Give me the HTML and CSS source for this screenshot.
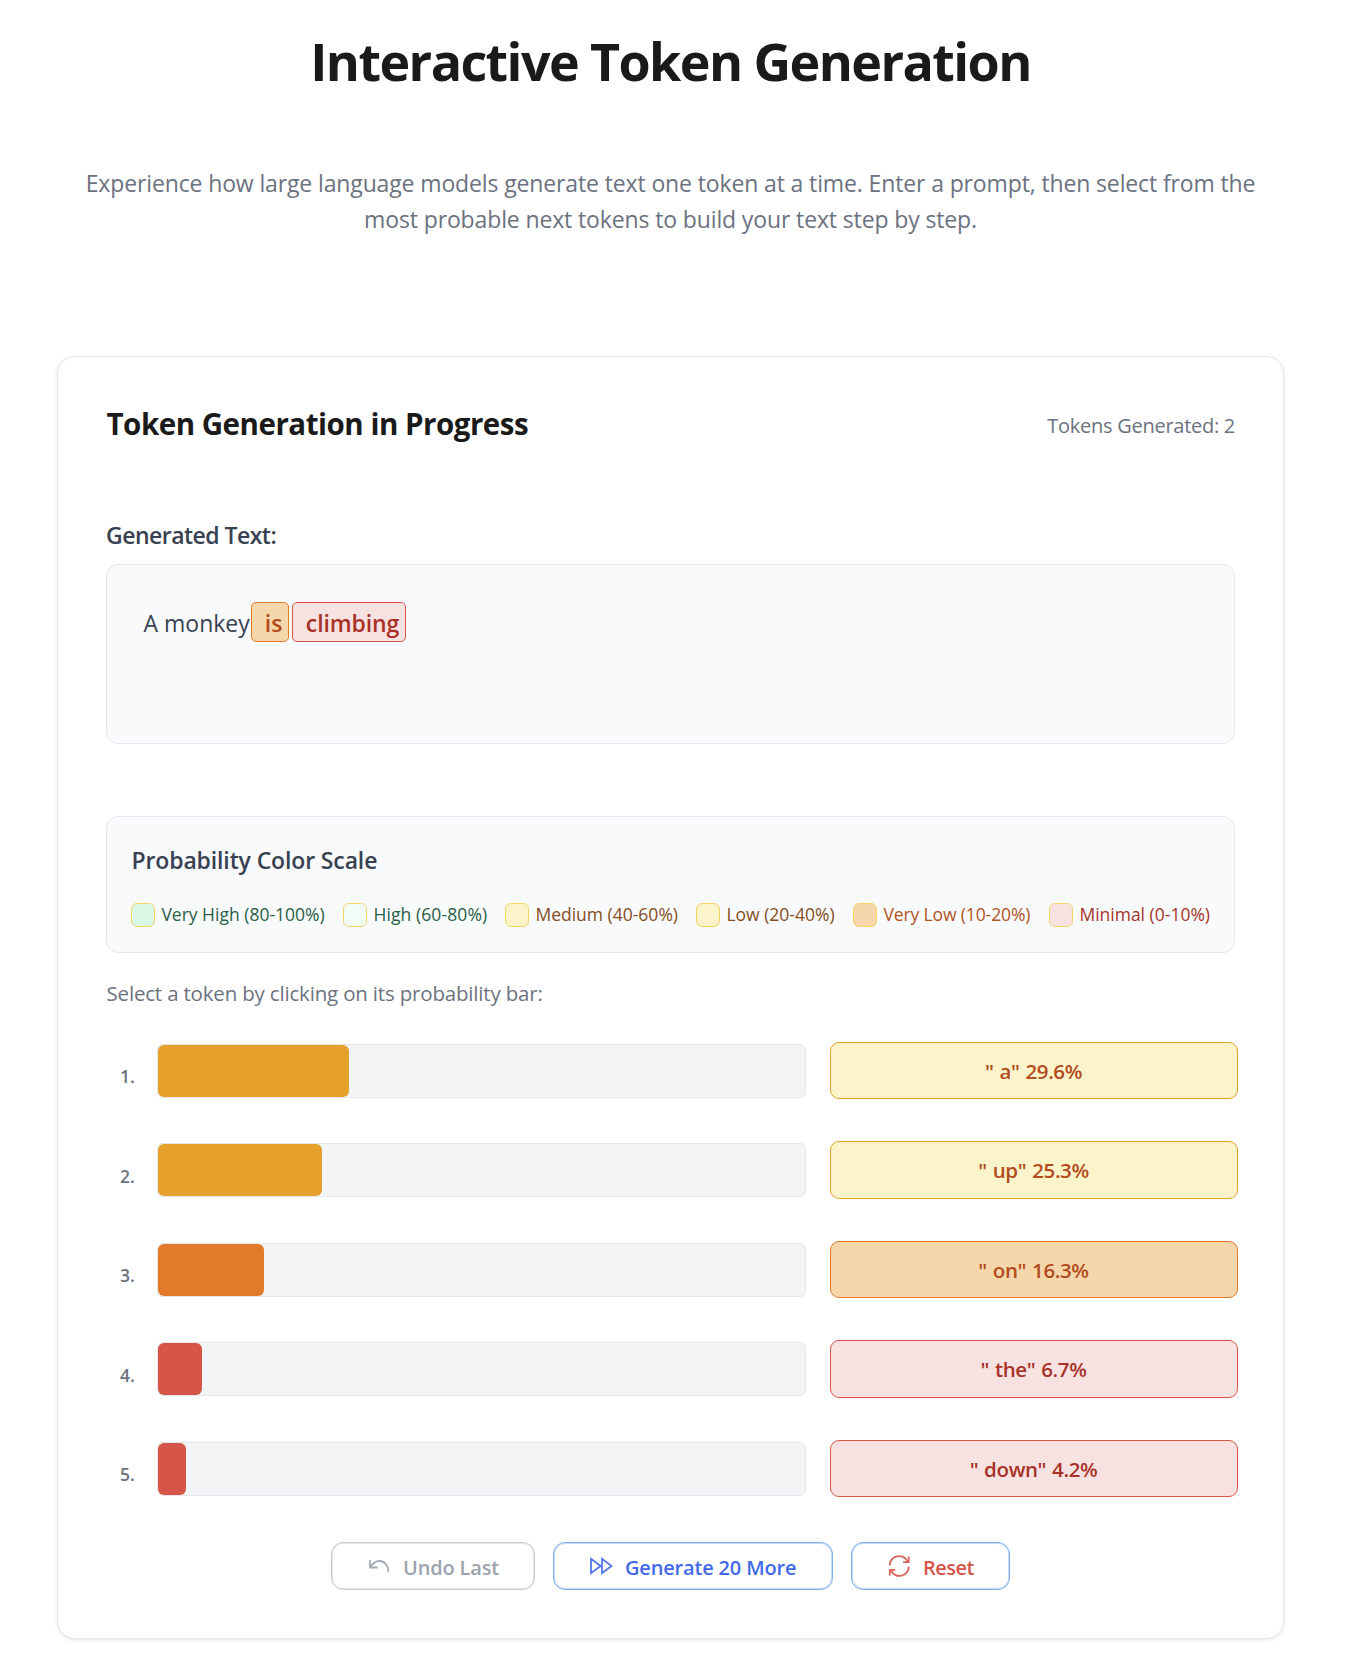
FILE: index.html
```html
<!DOCTYPE html>
<html lang="en">
<head>
<meta charset="utf-8">
<title>Interactive Token Generation</title>
<link rel="stylesheet" href="styles.css">
</head>
<body>
<main class="page">
  <header class="intro">
    <h1 class="intro-title">Interactive Token Generation</h1>
    <p class="intro-text">Experience how large language models generate text one token at a time. Enter a prompt, then select from the<br>most probable next tokens to build your text step by step.</p>
  </header>

  <section class="card">
    <div class="card-head">
      <h2 class="card-title">Token Generation in Progress</h2>
      <span class="counter">Tokens Generated: 2</span>
    </div>

    <h3 class="label">Generated Text:</h3>
    <div class="output"><span class="prompt">A monkey</span><span class="chip chip-is"> is</span><span class="chip chip-climbing"> climbing</span></div>

    <div class="scale">
      <h3 class="scale-title">Probability Color Scale</h3>
      <div class="legend">
        <div class="key key-vhigh"><i class="swatch"></i><span>Very High (80-100%)</span></div>
        <div class="key key-high"><i class="swatch"></i><span>High (60-80%)</span></div>
        <div class="key key-medium"><i class="swatch"></i><span>Medium (40-60%)</span></div>
        <div class="key key-low"><i class="swatch"></i><span>Low (20-40%)</span></div>
        <div class="key key-vlow"><i class="swatch"></i><span>Very Low (10-20%)</span></div>
        <div class="key key-min"><i class="swatch"></i><span>Minimal (0-10%)</span></div>
      </div>
    </div>

    <p class="hint">Select a token by clicking on its probability bar:</p>
    <div class="rows">
      <div class="row low"><span class="rank">1.</span><div class="track"><div class="fill" style="width:29.5%"></div></div><button class="token">" a" 29.6%</button></div>
      <div class="row low"><span class="rank">2.</span><div class="track"><div class="fill" style="width:25.3%"></div></div><button class="token">" up" 25.3%</button></div>
      <div class="row vlow"><span class="rank">3.</span><div class="track"><div class="fill" style="width:16.4%"></div></div><button class="token">" on" 16.3%</button></div>
      <div class="row minimal"><span class="rank">4.</span><div class="track"><div class="fill" style="width:6.8%"></div></div><button class="token">" the" 6.7%</button></div>
      <div class="row minimal"><span class="rank">5.</span><div class="track"><div class="fill" style="width:4.33%"></div></div><button class="token">" down" 4.2%</button></div>
    </div>

    <div class="actions">
      <button class="action undo"><svg class="icon" viewBox="0 0 24 24"><path d="M3 6v7.500h7.500M3.300 13.200C5.500 9.500 9 7 12.500 7c5.200 0 9 4.500 9 11"/></svg><span>Undo Last</span></button>
      <button class="action more"><svg class="icon" viewBox="0 0 24 24"><path d="M2 4.700v14.600L11.700 12zM13 4.700v14.600L22.600 12z"/></svg><span>Generate 20 More</span></button>
      <button class="action reset"><svg class="icon" viewBox="0 0 24 24"><path d="M2.800 11.500a9.300 8.700 0 0 1 18-3.700M21.700 2.500v5.600h-5.600M21.700 12.500a9.300 8.700 0 0 1-18 3.700M2.800 21.500v-5.600h5.600"/></svg><span>Reset</span></button>
    </div>
  </section>
</main>
</body>
</html>
```

FILE: styles.css
```css
* { box-sizing: border-box; }
body {
  margin: 0;
  background: #fff;
  color: #374151;
  font-family: "Open Sans", "Noto Sans", sans-serif;
}
h1, h2, h3, p { margin: 0; }
button { font-family: inherit; margin: 0; padding: 0; background: #fff; }

.page { width: 1227px; margin-left: 57px; padding: 29px 0; }

.intro { text-align: center; white-space: nowrap; }
.intro-title {
  font-size: 52px; line-height: 64px; font-weight: 700;
  letter-spacing: -1.58px; color: #1a1a1a;
}
.intro-text {
  margin-top: 72px; font-size: 23px; line-height: 36px;
  letter-spacing: -0.13px; color: #6b7280;
}

.card {
  margin-top: 119px; padding: 47px 48px 48px;
  border: 1px solid #e5e7eb; border-radius: 18px; background: #fff;
  box-shadow: 0 1px 4px rgba(0, 0, 0, 0.1);
}
.card-head { display: flex; justify-content: space-between; align-items: center; height: 40px; }
.card-title { padding-left: 0.5px; font-size: 29.5px; line-height: 40px; font-weight: 700; letter-spacing: -0.48px; color: #1a1a1a; }
.counter { padding-top: 4px; font-size: 20px; line-height: 28px; letter-spacing: -0.27px; color: #6b7280; }

.label, .scale-title { font-size: 23px; line-height: 36px; font-weight: 600; }
.label { margin-top: 73px; letter-spacing: -0.52px; }
.scale-title { padding-left: 0.5px; letter-spacing: -0.13px; }
.output {
  display: flex; align-items: baseline; height: 180px; margin-top: 11px; padding: 37px 36px;
  border: 1px solid #e5e7eb; border-radius: 12px; background: #f9fafc;
  font-size: 23px; line-height: 36px;
}
.prompt { width: 108px; padding-left: 0.5px; white-space: nowrap; }
.chip {
  height: 40px; padding: 3px 0 0 7px; border: 1px solid; border-radius: 5px;
  line-height: 35px; font-weight: 600; white-space: pre; letter-spacing: -0.12px;
}
.chip-is { width: 38px; margin-right: 3px; color: #b24c1c; background: #f5d7ab; border-color: #e47b2b; }
.chip-climbing { width: 114px; color: #a83228; background: #f8e2e1; border-color: #d65549; }

.scale {
  height: 137px; margin-top: 72px; padding: 25px 24px;
  border: 1px solid #e5e7eb; border-radius: 12px; background: #f9fafc;
}
.legend {
  display: grid; grid-template-columns: 194px 144px 173px 139px 178px 162px; column-gap: 18px;
  margin-top: 25px; font-size: 17.5px; line-height: 24px; white-space: nowrap;
}
.key { display: flex; gap: 6.4px; }
.key span { margin-top: -1px; }
.swatch { flex: none; width: 24px; height: 24px; border: 1px solid #f5d468; border-radius: 6px; }
.key-vhigh { color: #285f45; }
.key-vhigh .swatch { background: #daf7e6; }
.key-high { color: #285f45; letter-spacing: 0.1px; }
.key-high .swatch { background: #f2fcf6; }
.key-medium { color: #854d22; }
.key-medium .swatch { background: #fbf3ca; }
.key-low { color: #854d22; }
.key-low .swatch { background: #fbf3ca; }
.key-vlow { color: #b0531f; letter-spacing: -0.12px; }
.key-vlow .swatch { background: #f5d7ab; }
.key-min { color: #a5342c; }
.key-min .swatch { background: #f8e2e1; }

.hint { margin-top: 24px; padding-left: 0.5px; font-size: 20.5px; line-height: 32px; letter-spacing: -0.18px; color: #6b7280; }

.rows { display: grid; row-gap: 42.1px; width: 1132px; margin-top: 32.75px; }
.row { display: grid; grid-template-columns: 51px 649px 408px; height: 57.4px; }
.rank { width: 43px; padding-top: 22.4px; text-align: center; font-size: 17.5px; line-height: 24px; font-weight: 600; color: #6b7280; }
.track { height: 54px; margin-top: 2px; border: 1px solid #e5e7eb; border-radius: 6px; background: #f3f4f6; }
.fill { height: 100%; border-radius: 6px; }
.token {
  width: 408px; margin-left: 24px; padding: 2px 1px 0 0; height: 57.4px;
  border: 1px solid; border-radius: 9px;
  font-size: 20.5px; line-height: 53.4px; font-weight: 600; letter-spacing: -0.38px; word-spacing: 1px;
}
.low .fill { background: #e5a12b; }
.low .token { color: #b24c1c; background: #fbf3ca; border-color: #e5a12b; }
.vlow .fill { background: #e37a29; }
.vlow .token { color: #b24c1c; background: #f5d7ab; border-color: #e37a29; }
.minimal .fill { background: #d65549; }
.minimal .token { color: #a83228; background: #f8e2e1; border-color: #d65549; }

.actions { display: flex; justify-content: center; gap: 18px; margin-top: 44.85px; }
.action {
  display: flex; align-items: center; gap: 12px; height: 48px; padding-left: 35px;
  border: 1px solid #82aeea; border-radius: 12px; box-shadow: inset 0 0 0 1px #c4dbf8;
  font-size: 20px; line-height: 28px; font-weight: 600; letter-spacing: -0.17px; white-space: nowrap;
}
.action span { padding-top: 4px; }
.icon { flex: none; width: 24px; height: 24px; fill: none; stroke: currentColor; stroke-width: 1.8; opacity: 0.9; }
.undo { width: 204px; color: #9ca3af; border-color: #cbcbd5; box-shadow: inset 0 0 0 1px #e4e4ea; }
.more { width: 280px; color: #4169e8; }
.reset { width: 159px; color: #d65549; letter-spacing: -0.5px; }
```
